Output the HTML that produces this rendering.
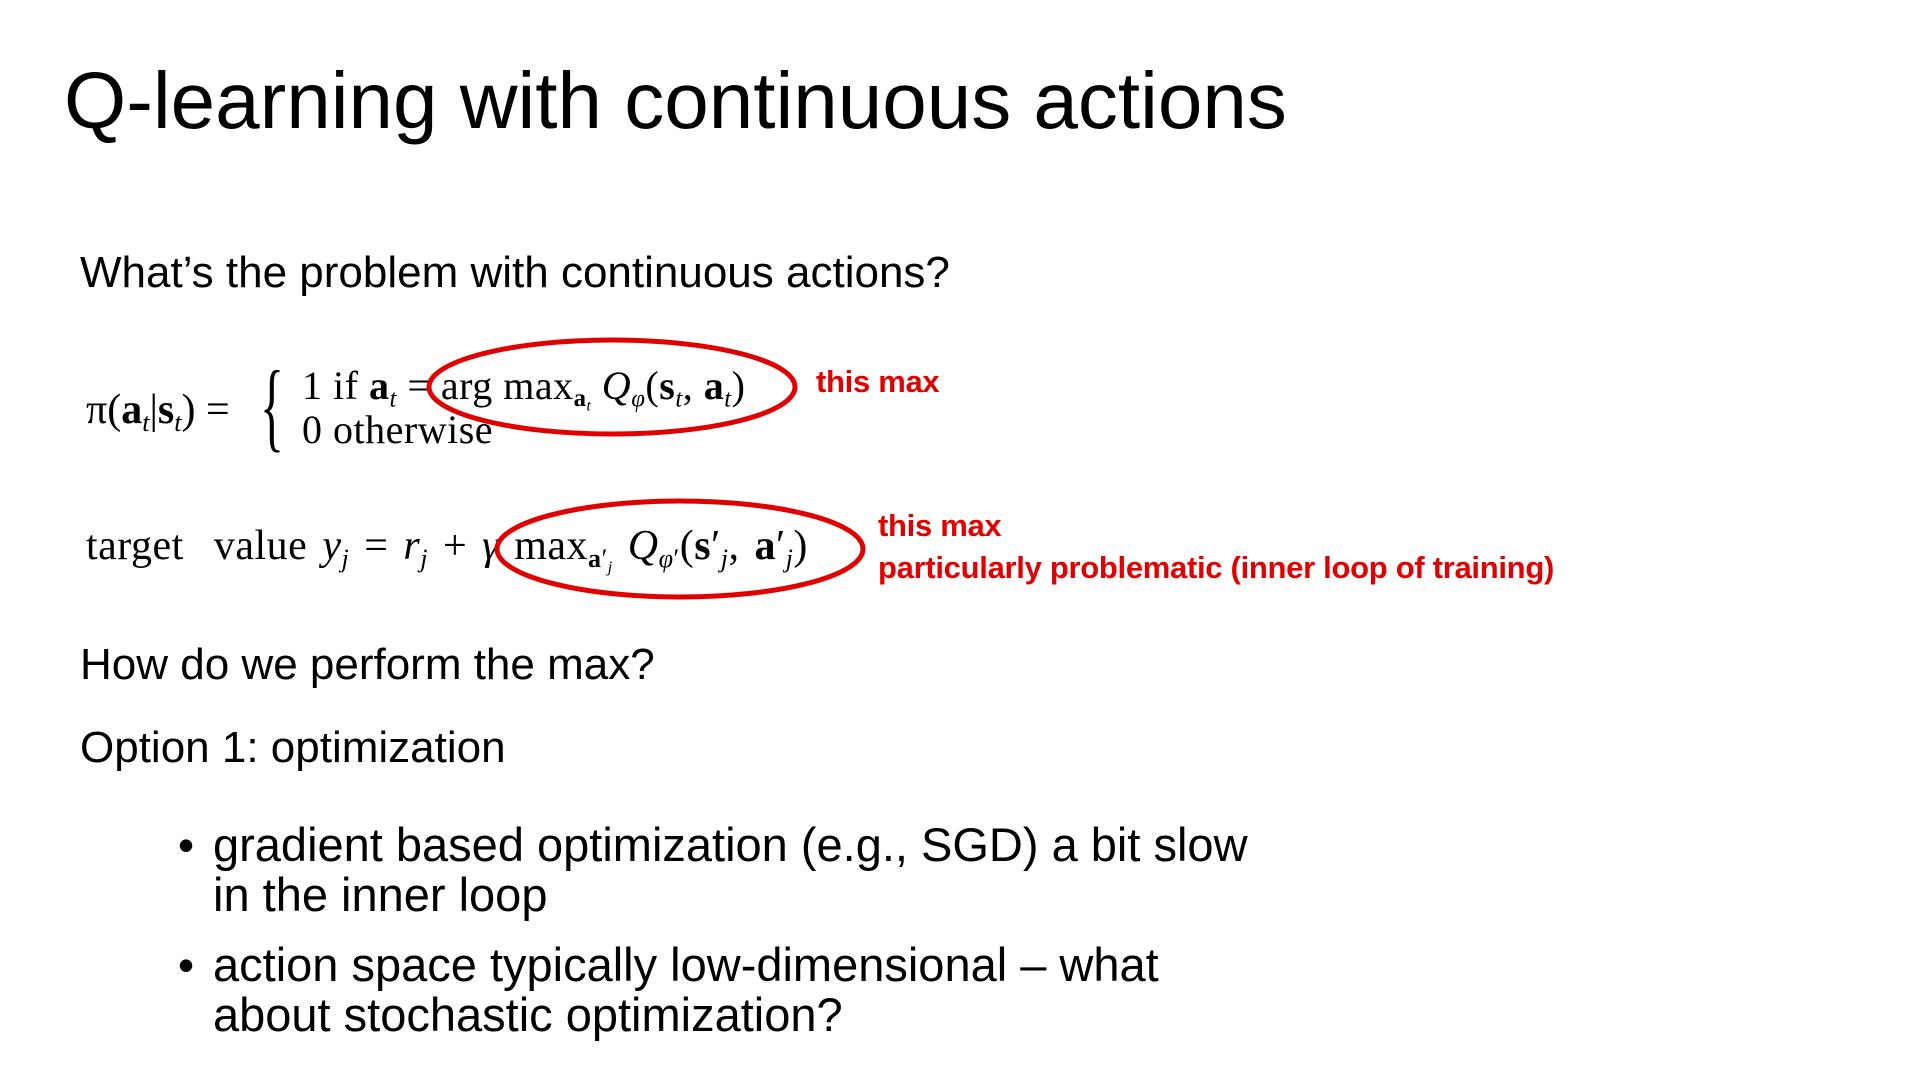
<!DOCTYPE html>
<html><head><meta charset="utf-8"><style>
body{margin:0;width:1920px;height:1080px;background:#fff;position:relative;overflow:hidden;font-family:"Liberation Sans",sans-serif;color:#000}
.a{position:absolute;white-space:nowrap}
.m{font-family:"Liberation Serif",serif;font-size:40px}
.r{color:#e00000;font-weight:bold;font-size:31px;letter-spacing:-0.3px}
i{font-style:italic}
sub{font-size:0.62em;vertical-align:-0.3em}
</style></head><body>
<div class="a" style="left:64px;top:58px;font-size:80px;line-height:86px">Q-learning with continuous actions</div>
<div class="a" style="left:80px;top:248px;font-size:44px;line-height:50px">What’s the problem with continuous actions?</div>

<div class="a m" style="left:86px;top:386px;font-size:42px">π(<b>a</b><sub><i>t</i></sub>|<b>s</b><sub><i>t</i></sub>) =</div>
<div class="a m" style="left:260px;top:356px;font-size:100px;line-height:100px;transform:scaleX(0.5);transform-origin:left">{</div>
<div class="a m" style="left:302px;top:362px;letter-spacing:0.5px">1 if <b>a</b><sub><i>t</i></sub> = arg max<sub><b>a</b><sub><i>t</i></sub></sub> <i>Q</i><sub><i>φ</i></sub>(<b>s</b><sub><i>t</i></sub>, <b>a</b><sub><i>t</i></sub>)</div>
<div class="a m" style="left:302px;top:406px;letter-spacing:0.5px">0 otherwise</div>

<div class="a m" style="left:86px;top:522px;font-size:42px;word-spacing:4px;letter-spacing:0.5px">target&nbsp; value <i>y<sub>j</sub></i> = <i>r<sub>j</sub></i> + <i>γ</i> max<sub><b>a</b>′<sub><i>j</i></sub></sub> <i>Q</i><sub><i>φ</i>′</sub>(<b>s</b>′<sub><i>j</i></sub>, <b>a</b>′<sub><i>j</i></sub>)</div>

<svg class="a" style="left:0;top:0" width="1920" height="1080">
<ellipse cx="612" cy="387" rx="183" ry="47" fill="none" stroke="#e00000" stroke-width="5"/>
<ellipse cx="680" cy="549" rx="183" ry="48" fill="none" stroke="#e00000" stroke-width="5"/>
</svg>

<div class="a r" style="left:816px;top:364px">this max</div>
<div class="a r" style="left:878px;top:508px">this max</div>
<div class="a r" style="left:878px;top:550px">particularly problematic (inner loop of training)</div>

<div class="a" style="left:80px;top:640px;font-size:44px;line-height:50px">How do we perform the max?</div>
<div class="a" style="left:80px;top:723px;font-size:44px;line-height:50px">Option 1: optimization</div>

<div class="a" style="left:178px;top:820px;font-size:46px;line-height:50px">•</div>
<div class="a" style="left:213px;top:820px;font-size:47px;line-height:50px">gradient based optimization (e.g., SGD) a bit slow<br>in the inner loop</div>
<div class="a" style="left:178px;top:940px;font-size:46px;line-height:50px">•</div>
<div class="a" style="left:213px;top:940px;font-size:47px;line-height:50px">action space typically low-dimensional – what<br>about stochastic optimization?</div>
</body></html>
